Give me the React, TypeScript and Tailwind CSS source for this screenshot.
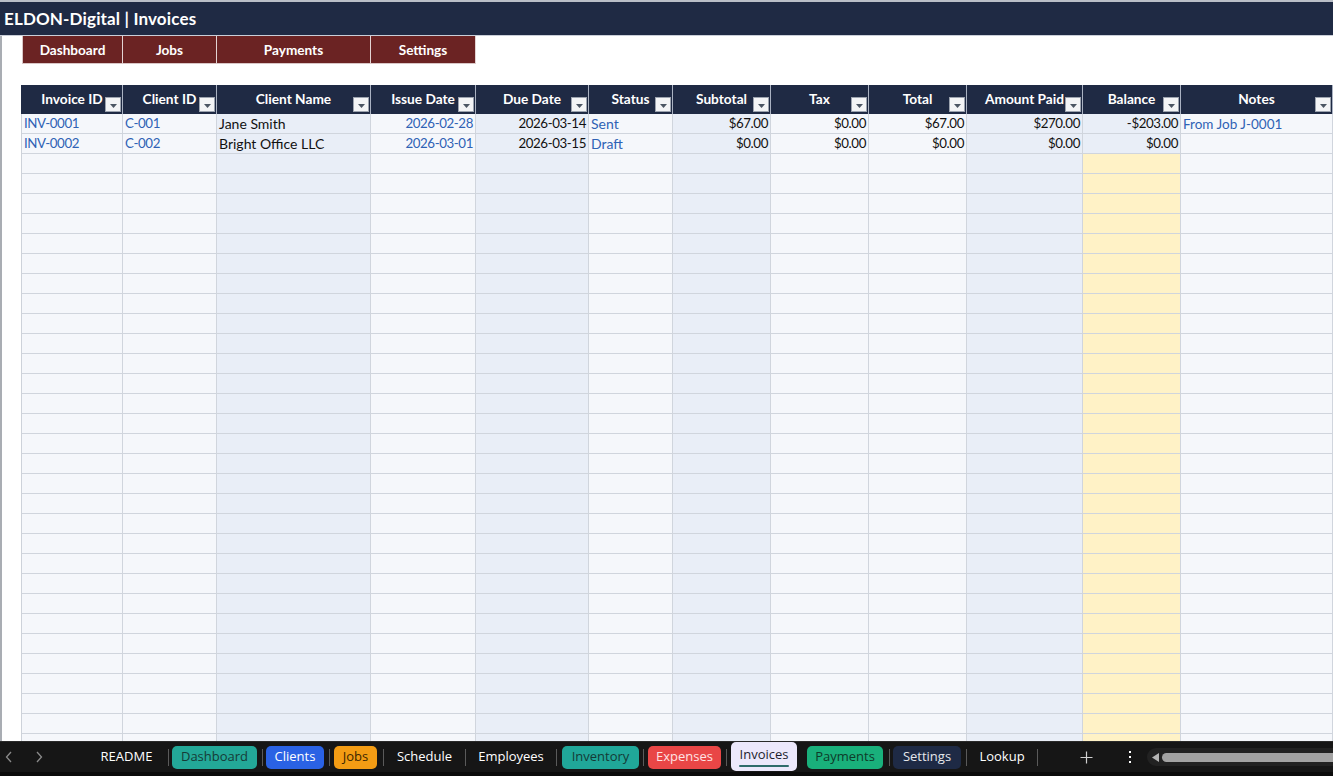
import React from "react";

type Col = {
  w: string;
  bg: string;
  h: string;
};

const cols: Col[] = [
  { w: "w-[101px]", bg: "bg-[#f5f7fb]", h: "Invoice ID" },
  { w: "w-[94px]", bg: "bg-[#f5f7fb]", h: "Client ID" },
  { w: "w-[154px]", bg: "bg-[#e9eef7]", h: "Client Name" },
  { w: "w-[105px]", bg: "bg-[#f5f7fb]", h: "Issue Date" },
  { w: "w-[113px]", bg: "bg-[#e9eef7]", h: "Due Date" },
  { w: "w-[84px]", bg: "bg-[#f5f7fb]", h: "Status" },
  { w: "w-[98px]", bg: "bg-[#e9eef7]", h: "Subtotal" },
  { w: "w-[98px]", bg: "bg-[#f5f7fb]", h: "Tax" },
  { w: "w-[98px]", bg: "bg-[#f5f7fb]", h: "Total" },
  { w: "w-[116px]", bg: "bg-[#e9eef7]", h: "Amount Paid" },
  { w: "w-[98px]", bg: "bg-[#fff2c6]", h: "Balance" },
  { w: "flex-1", bg: "bg-[#f5f7fb]", h: "Notes" },
];

type Cell = { t: string; blue?: boolean; right?: boolean; k?: "num" | "note" };

const data: Cell[][] = [
  [
    { t: "INV-0001", blue: true, k: "num" },
    { t: "C-001", blue: true, k: "num" },
    { t: "Jane Smith" },
    { t: "2026-02-28", blue: true, right: true, k: "num" },
    { t: "2026-03-14", right: true, k: "num" },
    { t: "Sent", blue: true },
    { t: "$67.00", right: true, k: "num" },
    { t: "$0.00", right: true, k: "num" },
    { t: "$67.00", right: true, k: "num" },
    { t: "$270.00", right: true, k: "num" },
    { t: "-$203.00", right: true, k: "num" },
    { t: "From Job J-0001", blue: true, k: "note" },
  ],
  [
    { t: "INV-0002", blue: true, k: "num" },
    { t: "C-002", blue: true, k: "num" },
    { t: "Bright Office LLC" },
    { t: "2026-03-01", blue: true, right: true, k: "num" },
    { t: "2026-03-15", right: true, k: "num" },
    { t: "Draft", blue: true },
    { t: "$0.00", right: true, k: "num" },
    { t: "$0.00", right: true, k: "num" },
    { t: "$0.00", right: true, k: "num" },
    { t: "$0.00", right: true, k: "num" },
    { t: "$0.00", right: true, k: "num" },
    { t: "" },
  ],
];

const FilterBtn = () => (
  <div className="absolute right-[1px] bottom-[2px] w-[16px] h-[15px] bg-[#f3f4f6] border border-[#9ca3af] flex items-end justify-center pb-[3px]">
    <svg width="7" height="4" viewBox="0 0 7 4">
      <path d="M0 0 L7 0 L3.5 4 Z" fill="#4b5563" />
    </svg>
  </div>
);

function TabSep() {
  return <div className="w-px h-[17px] bg-[#5a5a5a]" />;
}

function sizeClass(k?: "num" | "note") {
  if (k === "num") return "text-[13.3px] tracking-[-0.4px] pt-[1px]";
  if (k === "note") return "text-[13.5px] pt-[1px]";
  return "text-[14px]";
}

export default function App() {
  const emptyRows = Array.from({ length: 31 });
  const navItems = [
    { t: "Dashboard", w: "w-[101px]" },
    { t: "Jobs", w: "w-[94px]" },
    { t: "Payments", w: "w-[154px]" },
    { t: "Settings", w: "w-[105px]" },
  ];

  return (
    <div
      className="w-[1333px] h-[776px] overflow-hidden flex flex-col bg-white"
      style={{ fontFamily: "Lato, 'Open Sans', sans-serif" }}
    >
      {/* Title bar */}
      <div className="h-[36px] shrink-0 border-t-2 border-[#b9bec7] bg-[#1f2a44] border-b border-b-[#c9ced8] flex items-center pl-[4px]">
        <span className="text-white font-bold text-[17px] leading-none tracking-[0.15px]">
          ELDON-Digital | Invoices
        </span>
      </div>

      {/* Sheet body */}
      <div className="flex-1 overflow-hidden border-l-2 border-[#a9adb3] flex flex-col">
        {/* Nav row */}
        <div className="h-[28px] shrink-0 flex">
          <div className="w-[20px] shrink-0" />
          {navItems.map((n, i) => (
            <div
              key={n.t}
              className={`${n.w} shrink-0 bg-[#6b2323] flex items-center justify-center text-white font-bold text-[13.6px] pt-[1px] border-b border-[#d9c6c6] ${
                i === 0 ? "border-l border-l-[#d9c6c6]" : ""
              } border-r border-r-[#e3d3d3]`}
            >
              {n.t}
            </div>
          ))}
        </div>
        {/* gap row */}
        <div className="h-[21px] shrink-0" />
        {/* Header row */}
        <div className="h-[29px] shrink-0 flex">
          <div className="w-[20px] shrink-0 border-r border-[#1f2a44]" />
          {cols.map((c) => (
            <div
              key={c.h}
              className={`${c.w} shrink-0 relative bg-[#1f2a44] border-r border-[#aab2c2] flex items-center justify-center text-white font-bold text-[13.7px] pb-[1px] whitespace-nowrap`}
            >
              {c.h}
              <FilterBtn />
            </div>
          ))}
        </div>
        {/* Data rows */}
        {data.map((row, ri) => (
          <div key={ri} className="h-[20px] shrink-0 flex">
            <div className="w-[20px] shrink-0 border-r border-[#cdd2da]" />
            {cols.map((c, ci) => {
              const cell = row[ci];
              const bg = ci === 10 ? "bg-[#e9eef7]" : c.bg;
              return (
                <div
                  key={ci}
                  className={`${c.w} shrink-0 ${bg} border-r border-b border-[#d0d5dd] flex items-center px-[2px] ${sizeClass(
                    cell.k
                  )} whitespace-nowrap overflow-hidden ${
                    cell.right ? "justify-end" : "justify-start"
                  } ${cell.blue ? "text-[#2f62b5]" : "text-[#111111]"}`}
                >
                  {cell.t}
                </div>
              );
            })}
          </div>
        ))}
        {emptyRows.map((_, ri) => (
          <div key={"e" + ri} className="h-[20px] shrink-0 flex">
            <div className="w-[20px] shrink-0 border-r border-[#cdd2da]" />
            {cols.map((c, ci) => (
              <div
                key={ci}
                className={`${c.w} shrink-0 ${c.bg} border-r border-b border-[#d0d5dd]`}
              />
            ))}
          </div>
        ))}
      </div>

      {/* Sheet tab bar */}
      <div
        className="h-[35px] shrink-0 bg-[#161616] border-t border-[#2a2a2a] border-b-4 border-b-[#0b0b0b] flex items-center text-[13px]"
        style={{ fontFamily: "'Open Sans', 'Noto Sans', sans-serif" }}
      >
        <div className="w-[85px] shrink-0 flex items-center">
          <svg className="ml-[5px]" width="8" height="12" viewBox="0 0 8 12">
            <path d="M6 1 L1.5 6 L6 11" stroke="#8a8a8a" strokeWidth="1.3" fill="none" />
          </svg>
          <svg className="ml-[22px]" width="8" height="12" viewBox="0 0 8 12">
            <path d="M2 1 L6.5 6 L2 11" stroke="#8a8a8a" strokeWidth="1.3" fill="none" />
          </svg>
        </div>
        <div className="w-[83px] shrink-0 text-center text-white">README</div>
        <TabSep />
        <div className="ml-[3px] w-[85px] h-[23px] shrink-0 rounded-[5px] bg-[#23a898] text-[#163b37] flex items-center justify-center">
          Dashboard
        </div>
        <div className="ml-[5px]">
          <TabSep />
        </div>
        <div className="ml-[3px] w-[58px] h-[23px] shrink-0 rounded-[5px] bg-[#2a62e4] text-white flex items-center justify-center">
          Clients
        </div>
        <div className="ml-[5px]">
          <TabSep />
        </div>
        <div className="ml-[4px] w-[43px] h-[23px] shrink-0 rounded-[5px] bg-[#f39c14] text-[#3b2600] flex items-center justify-center">
          Jobs
        </div>
        <div className="ml-[6px]">
          <TabSep />
        </div>
        <div className="w-[81px] shrink-0 text-center text-white">Schedule</div>
        <TabSep />
        <div className="w-[90px] shrink-0 text-center text-white">Employees</div>
        <TabSep />
        <div className="ml-[5px] w-[77px] h-[23px] shrink-0 rounded-[5px] bg-[#20a799] text-[#143a36] flex items-center justify-center">
          Inventory
        </div>
        <div className="ml-[4px]">
          <TabSep />
        </div>
        <div className="ml-[4px] w-[73px] h-[23px] shrink-0 rounded-[5px] bg-[#e94646] text-[#ffe3e3] flex items-center justify-center">
          Expenses
        </div>
        <div className="ml-[5px]">
          <TabSep />
        </div>
        <div className="ml-[4px] w-[66px] h-[29px] self-start shrink-0 rounded-[5px] bg-[#ece8fb] text-[#1e1e2e] flex flex-col items-center justify-center relative">
          <span className="-mt-[3px]">Invoices</span>
          <div className="absolute bottom-[4px] left-[8px] right-[8px] h-[2px] bg-[#2f6b6b] rounded" />
        </div>
        <div className="ml-[10px] w-[76px] h-[23px] shrink-0 rounded-[5px] bg-[#19b07b] text-[#0e3b29] flex items-center justify-center">
          Payments
        </div>
        <div className="ml-[6px]">
          <TabSep />
        </div>
        <div className="ml-[3px] w-[68px] h-[23px] shrink-0 rounded-[5px] bg-[#1e2a45] text-[#e5e7eb] flex items-center justify-center">
          Settings
        </div>
        <div className="ml-[5px]">
          <TabSep />
        </div>
        <div className="w-[70px] shrink-0 text-center text-white">Lookup</div>
        <TabSep />
        <svg className="ml-[42px] shrink-0" width="13" height="13" viewBox="0 0 13 13">
          <path d="M6.5 0.5 V12.5 M0.5 6.5 H12.5" stroke="#d0d0d0" strokeWidth="1.2" />
        </svg>
        <div className="ml-[36px] w-[2px] shrink-0 flex flex-col items-center gap-[3px]">
          <div className="w-[2px] h-[2px] bg-white" />
          <div className="w-[2px] h-[2px] bg-white" />
          <div className="w-[2px] h-[2px] bg-white" />
        </div>
        <div className="ml-[16px] flex-1 h-[18px] rounded-l-full bg-[#222222] flex items-center pl-[5px]">
          <svg width="7" height="9" viewBox="0 0 7 9">
            <path d="M7 0 L0 4.5 L7 9 Z" fill="#b5b5b5" />
          </svg>
          <div className="ml-[3px] flex-1 h-[9px] rounded-l-full bg-[#a3a3a3]" />
        </div>
      </div>
    </div>
  );
}
